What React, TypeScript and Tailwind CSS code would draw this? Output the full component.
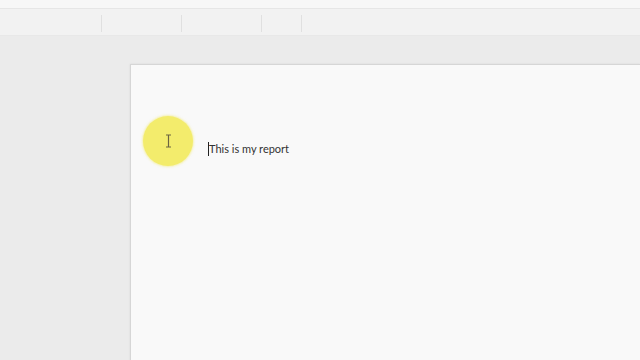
export default function App() {
  const separators = [101, 181, 261, 301];
  return (
    <div className="relative h-[360px] w-[640px] overflow-hidden bg-[#ebebeb] font-['Lato',sans-serif]">
      {/* title strip */}
      <div className="h-[9px] bg-[#f7f7f7] border-b border-[#e6e6e6]" />
      {/* ribbon strip */}
      <div className="flex h-[27px] bg-[#f2f2f2] border-b border-[#e8e8e8]">
        {separators.map((x, i) => (
          <div
            key={i}
            className="absolute top-[15px] h-[17px] w-px bg-[#e0e0e0]"
            style={{ left: x }}
          />
        ))}
      </div>
      {/* document area */}
      <div className="flex pt-[28px] pl-[130px]">
        <div className="relative h-[320px] flex-1 border-l border-t border-[#d6d6d6] bg-[#f9f9f9] shadow-[0_0_2px_rgba(0,0,0,0.08)]">
          <div className="flex items-center pl-[77px] pt-[77px]">
            <span className="h-[14px] w-px bg-[#222]" />
            <span className="text-[11px] leading-[14px] text-[#333]">This is my report</span>
          </div>
        </div>
      </div>
      {/* click highlight */}
      <div className="absolute left-[143px] top-[116px] flex h-[50px] w-[50px] items-center justify-center rounded-full bg-[#f3ec6c] shadow-[0_0_2px_1px_rgba(243,236,108,0.5)]">
        <svg width="7" height="14" viewBox="0 0 7 14" fill="none" stroke="#6b6440" strokeWidth="1.2">
          <path d="M1 1h5M3.5 1v12M1 13h5" />
        </svg>
      </div>
    </div>
  );
}
